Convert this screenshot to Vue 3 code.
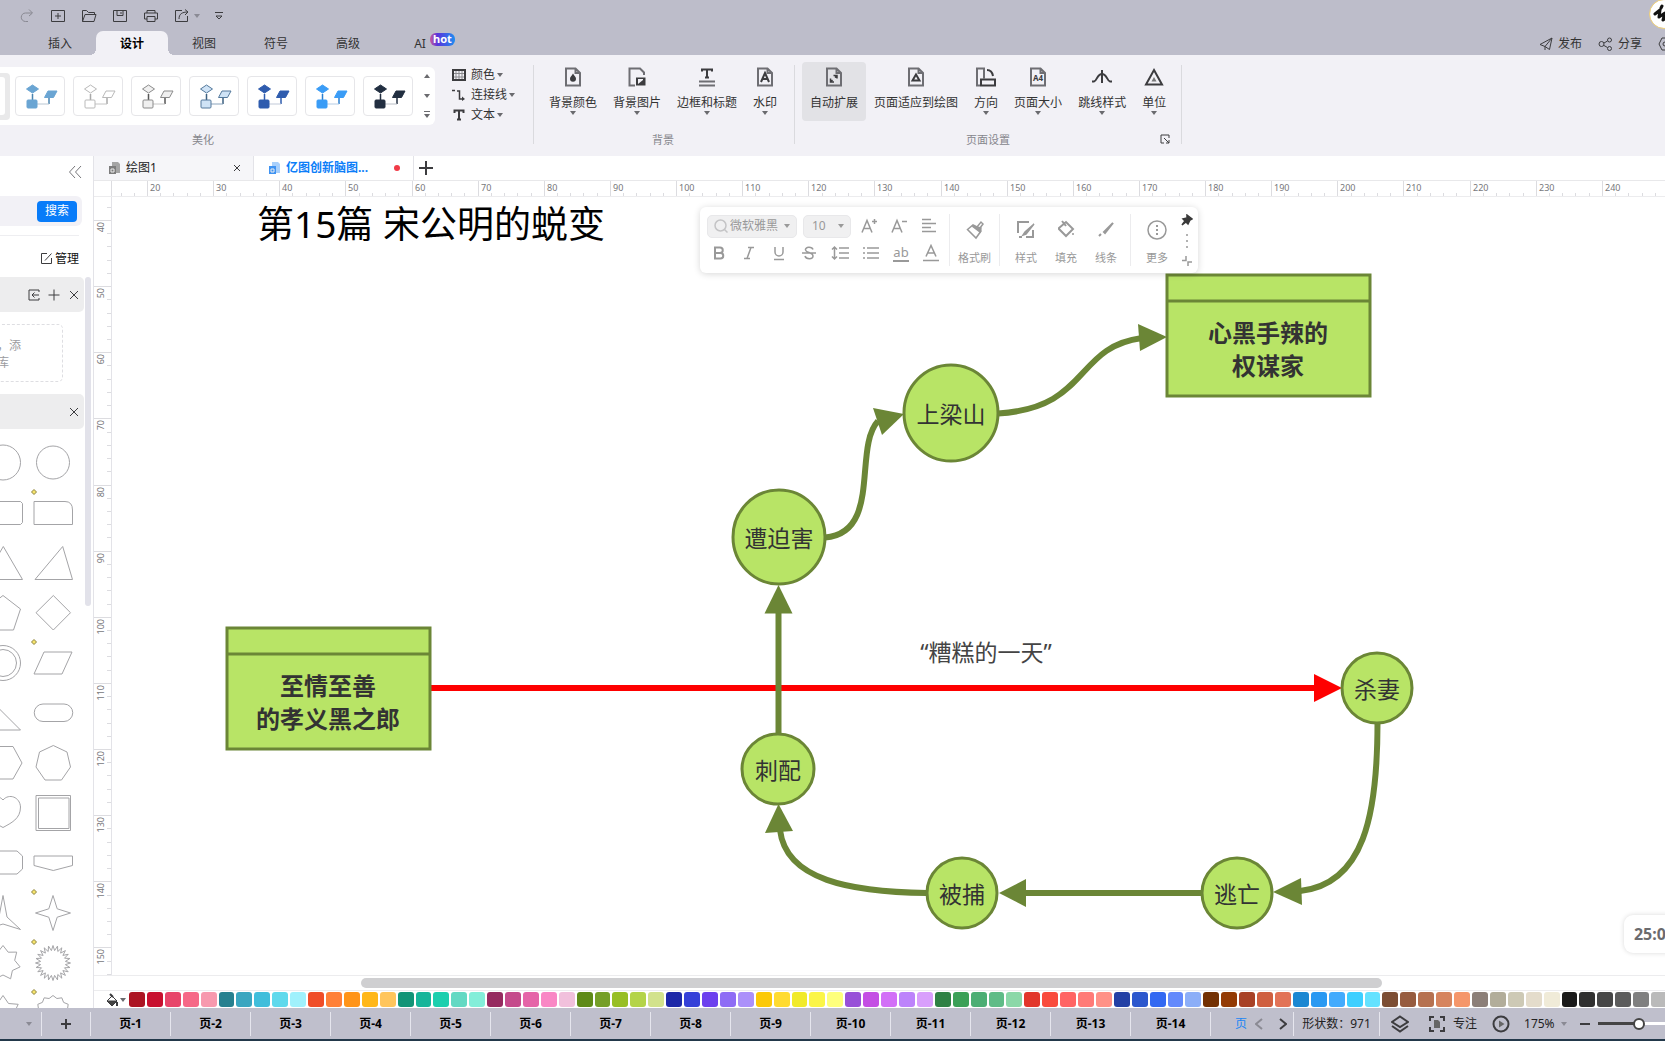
<script setup>
import { ref } from 'vue'

const menus = ['插入', '设计', '视图', '符号', '高级']

const themes = [
  { fill: '#6aa5d3', stroke: '#6aa5d3', line: '#b9c6d2', joint: '#4a84b0' },
  { fill: '#ffffff', stroke: '#b9b9b9', line: '#c4c4c4', joint: '#a9a9a9' },
  { fill: '#f0f0f0', stroke: '#8b8b8b', line: '#c4c4c4', joint: '#555555' },
  { fill: '#cfe3f6', stroke: '#54799c', line: '#8aa3bb', joint: '#3d6080' },
  { fill: '#2f5cae', stroke: '#2f5cae', line: '#c1c9d8', joint: '#2f5cae' },
  { fill: '#3a9cf6', stroke: '#3a9cf6', line: '#b4cbe4', joint: '#2a7fd0' },
  { fill: '#222f41', stroke: '#222f41', line: '#b9bec6', joint: '#222f41' },
]

const backgroundTools = [
  { id: 'bgcolor', label: '背景颜色', menu: true },
  { id: 'bgimage', label: '背景图片', menu: true },
  { id: 'border', label: '边框和标题', menu: true },
  { id: 'watermark', label: '水印', menu: true },
]
const pageTools = [
  { id: 'expand', label: '自动扩展', active: true },
  { id: 'fit', label: '页面适应到绘图' },
  { id: 'orient', label: '方向', menu: true },
  { id: 'size', label: '页面大小', menu: true },
  { id: 'jump', label: '跳线样式', menu: true },
  { id: 'unit', label: '单位', menu: true },
]
const groups = [
  { title: '背景', tools: backgroundTools },
  { title: '页面设置', tools: pageTools, launcher: true },
]

const UNIT = 6.613
function scale(first, origin, count, start) {
  const majors = []
  const mids = []
  const minors = []
  for (let i = -1; i < count; i++) {
    const at = origin + i * UNIT * 10
    if (i >= 0) majors.push({ at: Math.round(at), label: first + i * 10 })
    for (let k = 1; k < 5; k++) mids.push(Math.round(at + k * UNIT * 2))
    for (let k = 0; k < 20; k++) minors.push(Math.round(at + (k * UNIT) / 2))
  }
  return {
    majors,
    mids: mids.filter((v) => v > start),
    minors: minors.filter((v) => v > start),
  }
}
const hRuler = scale(20, 53, 23, 20)
const vRuler = scale(40, 23, 12, 0)

function star(points, outer, inner, turn = -90) {
  const list = []
  for (let i = 0; i < points * 2; i++) {
    const r = i % 2 ? inner : outer
    const a = ((turn + (i * 180) / points) * Math.PI) / 180
    list.push(`${(25 + r * Math.cos(a)).toFixed(1)},${(26 + r * Math.sin(a)).toFixed(1)}`)
  }
  return `M${list.join('L')}Z`
}
const shapes = [
  { name: '圆', d: 'M7.5 25.5a17.5 17.5 0 1 0 35 0a17.5 17.5 0 1 0 -35 0Z' },
  { name: '圆形', d: 'M8.5 25.5a16.5 16.5 0 1 0 33 0a16.5 16.5 0 1 0 -33 0Z' },
  { name: '圆角矩形', d: 'M8 14.5H42.5L44.5 16.5V35.5L42.5 37.5H8Q6 37.5 6 35.5V16.5Q6 14.5 8 14.5Z' },
  { name: '单圆角矩形', d: 'M6 14.5H37Q44.5 14.5 44.5 23V37.5H6Z', handle: true },
  { name: '三角形', d: 'M25.3 9.5L44.5 42.5H6Z' },
  { name: '斜三角形', d: 'M34.7 9.5L44.5 42.5H7Z' },
  { name: '五边形', d: 'M25 8.5L42.5 22L35.5 43H14.5L7.5 22Z' },
  { name: '菱形', d: 'M25.3 8.5L42.5 25.7L25.3 43L8 25.7Z' },
  { name: '圆环', d: 'M7.5 26a17.5 17.5 0 1 0 35 0a17.5 17.5 0 1 0 -35 0ZM11.5 26a13.5 13.5 0 1 0 27 0a13.5 13.5 0 1 0 -27 0Z' },
  { name: '平行四边形', d: 'M16 15H44L34 37H6Z', handle: true },
  { name: '直角三角形', d: 'M8 8.5L42.5 43H8Z' },
  { name: '胶囊', d: 'M15 17H36A8.7 8.7 0 0 1 36 34.5H15A8.7 8.7 0 0 1 15 17Z' },
  { name: '六边形', d: 'M15 9.5H35L44 26L35 42H15L6 26Z' },
  { name: '七边形', d: 'M25.3 8.5L39 15L42.5 30L33.5 43H17L8 30L11.5 15Z' },
  { name: '心形', d: 'M25 13C31 6 42 10 42.5 20C42.5 32 33 36 25 40.5C17 36 7.5 32 7.5 20C8 10 19 6 25 13Z' },
  { name: '边框', d: 'M8 8.5H42.5V43.5H8ZM10.5 11H41V41.5H10.5Z' },
  { name: '切角矩形', d: 'M11 14H39L44.5 19V32L39 37H11L6 32V19Z' },
  { name: '旗形', d: 'M6 19H44.5V28.5L25.3 33.5L6 28.5Z' },
  { name: '三角星', d: 'M25 8.5L29 30L42.5 42.5L25 37L7.5 42.5L21 30Z' },
  { name: '四角星', d: star(4, 17.5, 6), handle: true },
  { name: '七角星', d: star(7, 17.5, 12) },
  { name: '爆炸星', d: star(24, 17.5, 12.5), handle: true },
  { name: '六角星', d: star(6, 17.5, 11) },
  { name: '齿轮', d: star(12, 17.5, 15), handle: true },
]

const arrows = [
  { d: 'M431 688H1316', head: '1342,688 1314,674 1314,702', red: true },
  { d: 'M1377.5 723C1377.5 815 1364 884 1300 891', head: '1273,892 1301,878 1302,905' },
  { d: 'M1202 893H1024', head: '999,893 1026,879 1026,907' },
  { d: 'M927 893C850 892 786 880 780 830', head: '778.5,804 765,833 793,831' },
  { d: 'M778.5 734V611', head: '778.5,585 764.5,613.5 792.5,613.5' },
  { d: 'M825 537.5C882 533 853 448 878 421', head: '904,414 873,408 882,435' },
  { d: 'M998 413.5C1090 408 1074 347 1142 338', head: '1167,337 1138,324 1140,351' },
]
const boxes = [
  { x: 227, y: 628, lines: ['至情至善', '的孝义黑之郎'] },
  { x: 1167, y: 275, lines: ['心黑手辣的', '权谋家'] },
]
const nodes = [
  { x: 951, y: 413, rx: 47, ry: 48, label: '上梁山' },
  { x: 779, y: 537, rx: 46, ry: 47, label: '遭迫害' },
  { x: 778, y: 769, rx: 36, ry: 35, label: '刺配' },
  { x: 962, y: 893, rx: 35, ry: 35, label: '被捕' },
  { x: 1237, y: 893, rx: 35, ry: 35, label: '逃亡' },
  { x: 1377, y: 688, rx: 35, ry: 35, label: '杀妻' },
]

const swatches = (
  'ac1423 c80f2f e8456a f66887 f799ae 26808f 3aa6c0 40bedb 5fd9ec a0f1fc f04d28 ff8038 ff9419 ffb71a ffc55c ' +
  '129477 17b59a 1bcfae 63d9c3 83eed9 962a60 c54a8c e564a8 f987c5 f1c0dc 5e8a17 759f27 98bf25 b4d449 d2e28c ' +
  '1c27a8 3540d8 6d40ee 8e6cf5 ab90fa fcc907 ffdb30 f1ea2a fbf547 feff7c 9850d8 c44ee4 d26ff7 bd83fb d99ffc ' +
  '2f8144 3ba057 4cae74 5fbc87 8bd8a8 e2362b f94b3d ff6464 ff7a77 ff9187 2340a5 2c57cd 3268f2 6389fc 8caef8 ' +
  '733003 933a04 a84126 cf5f40 e27357 1b87d2 2a99f2 43abfd 3dcfff 64e2ff 7c4d33 965b3f b67150 d6845e f5966a ' +
  '8c7f78 b2ad9a cdc9b5 e4dccb f0ebd8 1a1a1a 303030 464646 5c5c5c 808080 bababa'
).split(' ')

const font = ref('微软雅黑')
const fontSize = ref('10')
</script>

<template>
  <div class="app">
    <header class="titlebar">
      <div class="quick">
        <button aria-label="重做" class="dim"><svg width="16" height="16"><path d="M13 5H6.5a4 4 0 0 0 0 8.5H9M10 1.5L13.5 5L10 8" /></svg></button>
        <button aria-label="新建"><svg width="16" height="16"><path d="M1.5 2.5h13v11h-13zM8 5v6M5 8h6" /></svg></button>
        <button aria-label="打开"><svg width="16" height="16"><path d="M1.5 13.5V2.5h4l2 2h6v2M1.5 13.5L4 6.5h11l-2 7z" /></svg></button>
        <button aria-label="保存"><svg width="16" height="16"><path d="M1.5 2.5h13v11h-13zM5 2.5v5h6v-5M9 4v2" /></svg></button>
        <button aria-label="打印"><svg width="16" height="16"><path d="M4 5V2.5h8V5M4 11H1.5V5h13v6H12M4 8.5h8v5H4z" /></svg></button>
        <button aria-label="导出"><svg width="16" height="16"><path d="M8 2.5H1.5v11h12V8M5 11c0-5 3-7 9-7M11 1.5L14 4l-3 3" /></svg></button>
        <i class="caret pale"></i>
        <button aria-label="自定义" class="more"><svg width="10" height="10"><path d="M1 1.5h8M2 5l3 3l3-3z" /></svg></button>
      </div>
      <button class="avatar" aria-label="账户"><svg width="28" height="28"><path d="M5 14L10 10L9 17L15 13L13 20L20 16M11 8l1-2" stroke="#111" stroke-width="3" fill="none" stroke-linecap="round" stroke-linejoin="round" /></svg></button>
      <nav class="menus">
        <button v-for="m in menus" :key="m" :class="{ active: m === '设计' }">{{ m }}</button>
        <button class="ai">AI<b class="hot">hot</b></button>
      </nav>
      <div class="actions">
        <button><svg width="14" height="14"><path d="M1 7.5L13 1L10.5 12.5L6 9.5zM6 9.5L13 1M6 9.5V13" /></svg>发布</button>
        <button><svg width="15" height="14"><circle cx="3.5" cy="7" r="2.5" /><circle cx="11.5" cy="3" r="2" /><circle cx="11.5" cy="11.5" r="2" /><path d="M6 6l3.5-2M6 8.5l3.5 2" /></svg>分享</button>
        <button aria-label="设置"><svg width="14" height="14"><path d="M4 1h6l3 6l-3 6H4L1 7z" /><circle cx="7" cy="7" r="2" /></svg></button>
      </div>
    </header>

    <section class="ribbon">
      <div class="beautify">
        <div class="gallery">
          <span class="picked"><i></i></span>
          <button v-for="(t, i) in themes" :key="i" class="theme" :aria-label="'主题 ' + (i + 1)">
            <svg width="48" height="38">
              <path d="M16.5 17V23M33 21V27" :stroke="t.joint" stroke-width="1.5" />
              <path d="M21 27H33" :stroke="t.line" />
              <g :stroke="t.stroke" :fill="t.fill">
                <path d="M10.5 12L16.5 8L22.5 12L16.5 16Z" />
                <rect x="11" y="23" width="10" height="8" rx="1" />
                <path d="M32 14H41L37.5 20.5H28.5Z" />
              </g>
            </svg>
          </button>
          <div class="steps"><i class="caret up"></i><i class="caret"></i><i class="caret bar"></i></div>
        </div>
        <p class="caption">美化</p>
      </div>
      <div class="styles">
        <button><svg width="14" height="12"><path d="M1 4.5h12M1 8h12M4 2v8M7 2v8M10 2v8" stroke="#8a8a8e" /><path d="M1 1h12v10H1z" stroke-width="2" /></svg>颜色<i class="caret"></i></button>
        <button><svg width="14" height="12"><path d="M0 1.5h3M5 2h2.5v8H10" stroke-width="1.5" /><path d="M10 7.5l3 2.5l-3 2z" fill="#3c3c3f" stroke="none" /></svg>连接线<i class="caret"></i></button>
        <button><svg width="14" height="12"><path d="M2.5 4V1.5h9V4M7 1.5v9M5 10.5h4" stroke-width="2" /></svg>文本<i class="caret"></i></button>
      </div>
      <div v-for="g in groups" :key="g.title" class="group">
        <div class="tools">
          <button v-for="t in g.tools" :key="t.id" class="tool" :class="{ on: t.active }">
            <svg width="20" height="20">
              <path v-if="['bgcolor', 'watermark', 'expand', 'fit', 'size'].includes(t.id)" class="page" d="M3 1.5h9.5l4.5 4.5v12.5H3zM12.5 1.5v4.5H17" />
              <path v-if="t.id === 'bgcolor'" d="M10 6.5C8.5 9 7 10 7 11.7a3 3 0 0 0 6 0C13 10 11.5 9 10 6.5Z" fill="#3c3c3f" stroke="none" />
              <g v-if="t.id === 'bgimage'"><path class="page" d="M8 18.5H2.5v-17H13l4 4V8" /><path d="M9 10.5h9.5v8H9z" fill="#3c3c3f" stroke="none" /><path d="M11 17l5-4v-1h-5z" fill="#f2f1f6" stroke="none" /></g>
              <g v-if="t.id === 'border'"><path d="M5 4.5V2.5h10v2M10 2.5v8M8 10.5h4" stroke-width="2" /><path class="page" d="M2 14.5h16M2 18.5h16" /></g>
              <path v-if="t.id === 'watermark'" d="M6 15L10 6L14 15M7.5 12h5" stroke-width="2" />
              <path v-if="t.id === 'expand'" d="M9.5 8.5h3.500v3M6.5 11.500v3.500h3.500M13 8.5L11 10.5M6.500 15l2-2" stroke-width="1.5" />
              <path v-if="t.id === 'fit'" d="M6.5 13.5L10 7.5L13.5 13.5Z" stroke-width="2" />
              <g v-if="t.id === 'orient'"><path class="page" d="M4 18.5H1v-17h7v10" /><path d="M5 12.5h14v6H5zM11 3q5 0 6 6" stroke-width="2" /></g>
              <text v-if="t.id === 'size'" x="5" y="14" font-size="8" font-weight="700" fill="#3c3c3f" stroke="none">A4</text>
              <path v-if="t.id === 'jump'" d="M0 14.5h2C5 14 5 7 10 7s5 7 8 7.5h2M10 3v13" stroke-width="2" />
              <g v-if="t.id === 'unit'"><path d="M10 3L18 17.5H2Z" stroke-width="2" /><path d="M10 10l2.5 4.5h-5z" fill="#777" stroke="none" /></g>
            </svg>
            <span>{{ t.label }}</span>
            <i v-if="t.menu" class="caret"></i>
          </button>
        </div>
        <p class="caption">{{ g.title }}</p>
        <button v-if="g.launcher" class="launcher" aria-label="页面设置选项"><svg width="10" height="10"><path d="M9 4V1H1v8h3M4 4l5 5M9 6v3H6" /></svg></button>
      </div>
    </section>

    <main class="work">
      <aside class="library">
        <div class="fold"><button aria-label="收起"><svg width="14" height="14"><path d="M7 1L1.5 7L7 13M13 1L7.5 7L13 13" /></svg></button></div>
        <div class="search"><button>搜索</button></div>
        <div class="manage"><button><svg width="11" height="11"><path d="M6 .5H.5v10h10V5M4 7.5L10.5 .5" /></svg>管理</button></div>
        <div class="lists">
          <div class="sheet">
            <div class="section">
              <button aria-label="导入"><svg width="12" height="12"><path d="M11 3V1H1v10h10V9M11 6H4M6.5 3.5L4 6l2.5 2.5" /></svg></button>
              <button aria-label="添加"><svg width="12" height="12"><path d="M6 .5v11M.5 6h11" /></svg></button>
              <button aria-label="关闭"><svg width="12" height="12"><path d="M2 2l8 8M10 2l-8 8" /></svg></button>
            </div>
            <p class="drop">，添<br />库</p>
            <div class="section">
              <button aria-label="关闭"><svg width="12" height="12"><path d="M2 2l8 8M10 2l-8 8" /></svg></button>
            </div>
            <div class="shapes">
              <button v-for="s in shapes" :key="s.name" :aria-label="s.name">
                <svg width="50" height="50"><path :d="s.d" /><path v-if="s.handle" class="handle" d="M6 2.5L8.5 5L6 7.5L3.5 5Z" /></svg>
              </button>
            </div>
          </div>
          <div class="track"><i></i></div>
        </div>
      </aside>

      <div class="editor">
        <div class="docs">
          <div class="doc">
            <svg width="13" height="14"><path d="M4 1h6l2 2v9H4z" fill="#a5a5a5" /><path d="M1 5h7v8H1z" fill="#7d7d7d" /><path d="M3 8h3v3H3z" fill="none" stroke="#eee" /></svg>
            <span>绘图1</span>
            <button aria-label="关闭绘图1"><svg width="8" height="8"><path d="M1 1l6 6M7 1L1 7" /></svg></button>
          </div>
          <div class="doc current">
            <svg width="13" height="14"><path d="M4 1h6l2 2v9H4z" fill="#a9d0fb" /><path d="M1 5h7v8H1z" fill="#3f93f2" /><path d="M3 8h3v3H3z" fill="none" stroke="#eee" /></svg>
            <span>亿图创新脑图...</span>
            <i class="dirty"></i>
          </div>
          <button class="add" aria-label="新建绘图"><svg width="14" height="14"><path d="M7 0v14M0 7h14" /></svg></button>
        </div>

        <svg class="hruler">
          <path v-for="m in hRuler.minors" :key="'n' + m" :d="`M${m}.5 15v2`" class="faint" />
          <path v-for="m in hRuler.mids" :key="'m' + m" :d="`M${m}.5 12v5`" />
          <path d="M17.5 0v17" />
          <g v-for="m in hRuler.majors" :key="m.label"><path :d="`M${m.at}.5 0v17`" /><text :x="m.at + 3" y="10">{{ m.label }}</text></g>
        </svg>

        <div class="stage">
          <svg class="vruler">
            <path v-for="m in vRuler.mids" :key="'m' + m" :d="`M13 ${m}.5h4`" />
            <g v-for="m in vRuler.majors" :key="m.label"><path :d="`M0 ${m.at}.5h17`" /><text text-anchor="end" :transform="`translate(10 ${m.at + 2}) rotate(-90)`">{{ m.label }}</text></g>
          </svg>
          <svg class="canvas">
            <g transform="translate(-112 -197)">
              <text class="title" x="257" y="238">第15篇 宋公明的蜕变</text>
              <g v-for="(a, i) in arrows" :key="i" :class="a.red ? 'flow red' : 'flow'"><path :d="a.d" /><polygon :points="a.head" /></g>
              <g v-for="b in boxes" :key="b.x" class="node">
                <rect :x="b.x" :y="b.y" width="203" height="121" />
                <path :d="`M${b.x} ${b.y + 26}h203`" />
                <text v-for="(l, i) in b.lines" :key="l" class="strong" :x="b.x + 101" :y="b.y + 67 + i * 33">{{ l }}</text>
              </g>
              <g v-for="n in nodes" :key="n.label" class="node">
                <ellipse :cx="n.x" :cy="n.y" :rx="n.rx" :ry="n.ry" />
                <text :x="n.x" :y="n.y + 10">{{ n.label }}</text>
              </g>
              <g class="node"><text class="note" x="986" y="661">“糟糕的一天”</text></g>
            </g>
          </svg>

          <div class="float">
            <div class="format">
              <div class="row">
                <label class="pick face"><svg width="14" height="14"><circle cx="6.5" cy="6.5" r="5.5" /><path d="M10.5 10.5l3 3" /></svg><select v-model="font" aria-label="字体"><option>微软雅黑</option></select><i class="caret"></i></label>
                <label class="pick num"><select v-model="fontSize" aria-label="字号"><option>10</option></select><i class="caret"></i></label>
                <button aria-label="增大字号"><svg width="16" height="16"><path d="M1 14.5L6 2.5L11 14.5M3 10.5h6M13.5 1v5M11 3.5h5" /></svg></button>
                <button aria-label="减小字号"><svg width="16" height="16"><path d="M1 14.5L6 2.5L11 14.5M3 10.5h6M11 3.5h5" /></svg></button>
                <button aria-label="对齐"><svg width="16" height="16"><path d="M1 1.5h9M1 5.5h14M1 9.5h9M1 13.5h14" /></svg></button>
              </div>
              <div class="row marks">
                <button aria-label="粗体"><svg width="16" height="16"><path d="M4 2.5h5a2.5 2.5 0 0 1 0 5.5H4zM4 8h5.5a2.5 2.5 0 0 1 0 5.5H4z" stroke-width="2" /></svg></button>
                <button aria-label="斜体"><svg width="16" height="16"><path d="M7 2.5h6M3 13.5h6M10 2.5L6 13.5" /></svg></button>
                <button aria-label="下划线"><svg width="16" height="16"><path d="M4 2v5a4 4 0 0 0 8 0V2M3 14.5h10" /></svg></button>
                <button aria-label="删除线"><svg width="16" height="16"><path d="M12 4.5C11 1.5 4 1.5 4.5 5c.5 3 7.5 2 7.5 6c0 3.5-7 3.5-8 0M1 8h14" /></svg></button>
                <button aria-label="行距"><svg width="18" height="16"><path d="M3.5 2v12M1 4.5L3.5 2L6 4.5M1 11.5L3.5 14L6 11.5M8 3h10M8 8h10M8 13h10" /></svg></button>
                <button aria-label="项目符号"><svg width="16" height="16"><path d="M0 3h2M0 8h2M0 13h2M4 3h12M4 8h12M4 13h12" /></svg></button>
                <button class="letters" aria-label="高亮">ab</button>
                <button aria-label="字体颜色"><svg width="16" height="18"><path d="M3 12.5L8 1.5L13 12.5M5 9h6M0 16.5h16" /></svg></button>
              </div>
            </div>
            <div class="slot brush"><button><svg width="20" height="22"><path d="M2.500 10.500L8 6L12 8L16 3L18 5L15 9L16 12L11 19Z" /><path d="M7 7l8 6l1-4l-4-1z" fill="#999" /></svg>格式刷</button></div>
            <div class="slot trio">
              <button><svg width="20" height="22"><path d="M2 14V3h11M17 11v7h-7M3 18h3" stroke-width="2" /><path d="M18 5L9 13l-2 3l3-1Z" fill="#999" /></svg>样式</button>
              <button><svg width="20" height="22"><path d="M3 9L10 3L17 10L10 17L3 10ZM6 2l4 5" stroke-width="2" /><circle cx="17" cy="15" r="1" fill="#999" stroke="none" /></svg>填充</button>
              <button><svg width="20" height="22"><path d="M17 4L8 13l1 1ZM3 17l2-2" stroke-width="2" /></svg>线条</button>
            </div>
            <div class="slot"><button><svg width="20" height="22"><circle cx="10" cy="11" r="9" /><path d="M10 6v2M10 10v2M10 14v2" stroke-width="2" /></svg>更多</button></div>
            <div class="edge">
              <button aria-label="固定"><svg width="12" height="12"><path d="M6 1l5 4l-2 1l-2 4l-2-2l-4 3l3-4l-2-2l4-1z" fill="#3a3a3a" stroke="#3a3a3a" /></svg></button>
              <svg width="4" height="16"><path d="M2 1v2M2 7v2M2 13v2" /></svg>
              <svg width="10" height="10"><path d="M0 4.5h4V0M6 10V6h4" /></svg>
            </div>
          </div>
          <div class="timer">25:00</div>
        </div>

        <div class="hscroll"><i></i></div>
        <div class="palette">
          <button class="bucket" aria-label="填充颜色"><svg width="14" height="14"><path d="M2 8L7 3L12 8L7 13Z" fill="#fff" /><path d="M2 8h10L7 13Z" fill="#444" /><path d="M5 1l3 3M12 9v4" stroke-width="2" /></svg><i class="caret"></i></button>
          <div class="swatches"><button v-for="c in swatches" :key="c" :aria-label="'#' + c" :style="{ background: '#' + c }"></button></div>
        </div>
      </div>
    </main>

    <footer class="status">
      <div class="cell drop-pages"><i class="caret pale"></i></div>
      <button class="cell plus" aria-label="添加页面"><svg width="10" height="10"><path d="M5 0v10M0 5h10" stroke-width="2" /></svg></button>
      <button v-for="n in 14" :key="n" class="cell tab">页-{{ n }}</button>
      <div class="cell turn">
        <a href="#">页</a>
        <button aria-label="上一页" class="dim"><svg width="8" height="12"><path d="M7 1L1 6L7 11" stroke-width="2" /></svg></button>
        <button aria-label="下一页"><svg width="8" height="12"><path d="M1 1L7 6L1 11" stroke-width="2" /></svg></button>
      </div>
      <div class="cell count">形状数：971</div>
      <div class="view">
        <button aria-label="图层"><svg width="18" height="18"><path d="M9 1.5L17 7L9 12L1 7ZM1 11L9 16.5L17 11" stroke-width="2" /></svg></button>
        <button class="focus"><svg width="16" height="16"><path d="M1 5V1h4M11 1h4v4M15 11v4h-4M5 15H1v-4" stroke-width="2" /><path d="M5 4h4l2 2v6H5z" fill="#666" stroke="none" /></svg>专注</button>
        <button aria-label="播放" class="play"><svg width="18" height="18"><circle cx="9" cy="9" r="7.5" stroke-width="2" /><path d="M7 5.5L12.5 9L7 12.5Z" fill="#666" stroke="none" /></svg></button>
        <span class="zoom">175%</span><i class="caret pale"></i>
        <button aria-label="缩小" class="minus"><svg width="10" height="2"><path d="M0 1h10" stroke-width="2" /></svg></button>
        <input type="range" min="0" max="100" value="42" aria-label="缩放" />
      </div>
    </footer>
  </div>
</template>

<style>
body { margin: 0; overflow: hidden; }
</style>

<style scoped>
.app { display: flex; flex-direction: column; height: 100vh; overflow: hidden; background: #fff; border-bottom: 2px solid #22384a; box-sizing: border-box; font: 12px/16px "Noto Sans", "Noto Sans CJK SC", sans-serif; color: #333; }
button { margin: 0; padding: 0; border: 0; background: none; font: inherit; color: inherit; display: flex; align-items: center; justify-content: center; flex: none; }
svg { display: block; flex: none; fill: none; stroke: #3c3c3f; }
p { margin: 0; }
.caret { flex: none; width: 0; height: 0; border: 3px solid transparent; border-top: 4px solid #6a6a6e; border-bottom: 0; }
.caret.pale { border-top-color: #8a8a94; }
.caret.up { border-bottom: 4px solid #6a6a6e; border-top: 0; }
.caret.bar { position: relative; }
.caret.bar::before { content: ""; position: absolute; left: -3px; top: -7px; width: 6px; height: 1px; background: #6a6a6e; }
.dim { opacity: .4; }

.titlebar { flex: none; height: 55px; display: grid; grid-template: 31px 24px / 1fr auto; background: #bdbdca; }
.quick { display: flex; align-items: center; gap: 15px; padding-left: 19px; }
.quick .caret { margin-left: -11px; }
.quick .more { margin-left: -1px; }
.avatar { justify-self: end; width: 28px; height: 28px; border-radius: 50%; background: #fff; outline: 1px solid #f2d27a; margin-right: -13px; }
.menus { display: flex; padding-left: 24px; }
.menus button { width: 72px; position: relative; padding-top: 2px; }
.menus .active { background: #f2f1f6; border-radius: 7px 7px 0 0; font-weight: 700; color: #000; }
.menus .active::before, .menus .active::after { content: ""; position: absolute; bottom: 0; width: 6px; height: 6px; }
.menus .active::before { left: -6px; background: radial-gradient(circle at 0 0, #bdbdca 6px, #f2f1f6 6px); }
.menus .active::after { right: -6px; background: radial-gradient(circle at 100% 0, #bdbdca 6px, #f2f1f6 6px); }
.hot { position: absolute; left: 46px; top: 2px; height: 13px; padding: 0 3px; border-radius: 6px; background: linear-gradient(90deg, #c85a9e, #5a35dc 30%, #1e8df0); color: #fff; font-size: 11px; line-height: 12px; }
.actions { display: flex; gap: 16px; margin-right: -7px; }
.actions button { gap: 5px; padding-top: 2px; }

.ribbon { flex: none; height: 101px; display: flex; background: #f2f1f6; }
.beautify { width: 435px; padding-top: 12px; }
.gallery { display: flex; align-items: center; height: 58px; background: #fff; border-radius: 0 6px 6px 0; }
.picked { width: 10px; height: 47px; margin-right: 5px; background: #e9e9ea; border-radius: 0 4px 4px 0; display: flex; align-items: center; }
.picked i { width: 5px; height: 38px; background: #fff; border-radius: 0 3px 3px 0; }
.theme { width: 50px; height: 40px; margin-right: 8px; border: 1px solid #e6e6e9; border-radius: 4px; }
.steps { display: flex; flex-direction: column; align-items: center; gap: 16px; margin-left: 3px; }
.caption { text-align: center; font-size: 11px; line-height: 16px; color: #86868c; }
.beautify .caption { width: 406px; margin-top: 7px; }
.styles { width: 98px; padding: 12px 0 0 17px; box-sizing: border-box; display: flex; flex-direction: column; align-items: flex-start; gap: 4px; }
.beautify, .styles { flex: none; }
.styles button { gap: 5px; }
.styles .caret { margin-left: -3px; }
.group { position: relative; padding: 7px 8px 0; flex: none; }
.group:nth-child(3) { padding-right: 9px; }
.group::before, .group:last-child::after { content: ""; position: absolute; left: 0; top: 10px; width: 1px; height: 79px; background: #dadade; }
.group:last-child::after { left: auto; right: 0; }
.tools { display: flex; height: 59px; }
.tool { flex-direction: column; justify-content: flex-start; padding: 5px 8px 0; border-radius: 4px; }
.tool.on { background: #e2e2e6; }
.tool span { margin-top: 8px; line-height: 16px; }
.tool .caret { margin-top: 0; }
.page { stroke: #6e6e73; stroke-width: 2; }
.group .caption { margin-top: 11px; }
.launcher { position: absolute; right: 12px; top: 79px; }

.work { flex: 1; min-height: 0; display: flex; }
.library { flex: none; width: 93px; border-right: 1px solid #e3e3e8; display: flex; flex-direction: column; overflow: hidden; }
.fold { height: 40px; display: flex; justify-content: flex-end; align-items: center; padding: 0 11px 8px 0; box-sizing: border-box; }
.fold svg { stroke: #77777b; }
.search { height: 30px; width: 82px; background: #f2f1f6; border-radius: 0 6px 6px 0; display: flex; align-items: center; justify-content: flex-end; padding-right: 5px; box-sizing: border-box; flex: none; }
.search button { width: 40px; height: 21px; border-radius: 4px; background: #087cf9; color: #fff; }
.manage { flex: none; margin-top: 9px; width: 79px; height: 42px; border-top: 1px solid #eeeef1; box-sizing: border-box; display: flex; align-items: center; justify-content: flex-end; padding-top: 4px; }
.manage button { gap: 3px; color: #111; }
.lists { flex: 1; min-height: 0; display: flex; gap: 1px; }
.sheet { width: 84px; overflow: hidden; }
.section { height: 35px; background: #ededee; border-radius: 0 5px 5px 0; display: flex; align-items: center; justify-content: flex-end; gap: 8px; padding-right: 4px; }
.drop { height: 58px; width: 66px; margin: 12px 0 12px -3px; border: 1px dashed #dedee2; border-left: 0; border-radius: 0 5px 5px 0; box-sizing: border-box; padding-top: 12px; color: #9b9ba0; line-height: 17px; }
.track { width: 6px; }
.track i { display: block; height: 45%; border-radius: 3px; background: #e2e2ea; }
.shapes { display: grid; grid-template-columns: 50px 50px; margin: 8px 0 0 -22px; }
.shapes svg { stroke: #a4a4a7; }
.shapes .handle { fill: #f7e56a; stroke: #8c8240; }

.editor { flex: 1; min-width: 0; display: flex; flex-direction: column; }
.docs { flex: none; height: 24px; display: flex; }
.doc { width: 160px; box-sizing: border-box; background: #f6f6f9; border-right: 1px solid #e3e3e8; display: flex; align-items: center; gap: 5px; padding: 0 12px 0 14px; color: #222; }
.doc span { flex: 1; }
.doc > svg { stroke: none; }
.current { background: #fff; color: #0c7ef8; font-weight: 700; }
.dirty { width: 6px; height: 6px; border-radius: 50%; background: #f13b47; margin-right: 1px; }
.add { margin-left: 5px; }
.add svg { stroke-width: 2; }
.hruler { width: 100%; height: 17px; border-top: 1px solid #e8e8ea; border-bottom: 1px solid #ececee; box-sizing: border-box; stroke: #dcdce0; }
.hruler text, .vruler text { font-size: 9px; fill: #77777b; stroke: none; }
.faint { stroke: #ebebee; }
.stage { flex: 1; min-height: 0; display: flex; position: relative; overflow: hidden; }
.vruler { width: 18px; height: 100%; border-right: 1px solid #e3e3e8; box-sizing: border-box; stroke: #dcdce0; }
.canvas { flex: 1; height: 100%; stroke: none; }
.title { font-size: 37px; fill: #000; }
.flow path { stroke: #6b8636; stroke-width: 6; fill: none; }
.flow polygon { fill: #6b8636; }
.flow.red path { stroke: #fe0000; }
.flow.red polygon { fill: #fe0000; }
.node rect, .node ellipse, .node path { fill: #b8e466; stroke: #6b8636; stroke-width: 3; }
.node text { font-size: 23px; fill: #333; text-anchor: middle; }
.node .strong { font-size: 24px; font-weight: 700; }
.node .note { fill: #444; }

.float { position: absolute; left: 606px; top: 10px; height: 66px; display: flex; background: #fff; border-radius: 6px; box-shadow: 0 1px 7px rgba(0, 0, 0, .16); color: #999; box-sizing: border-box; padding: 7px 0; font-size: 11px; }
.float svg { stroke: #999; stroke-width: 1.5; }
.format { width: 242px; padding-left: 7px; display: flex; flex-direction: column; gap: 3px; }
.row { display: flex; align-items: center; gap: 14px; height: 24px; }
.pick { height: 23px; background: #f0f0f1; border: 1px solid #e8e8ea; border-radius: 5px; box-sizing: border-box; display: flex; align-items: center; padding: 0 6px; }
.pick select { appearance: none; flex: 1; min-width: 0; border: 0; padding: 0; background: none; font: inherit; font-size: 12px; color: inherit; }
.pick .caret { border-top-color: #999; }
.face { width: 90px; margin-right: -8px; }
.face svg { margin-right: 2px; stroke: #c4c4c6; }
.num { width: 48px; margin-right: -4px; padding-left: 8px; }
.marks { padding-left: 4px; }
.letters { width: 16px; height: 18px; font-size: 13px; line-height: 15px; border-bottom: 2px solid #999; }
.slot { display: flex; gap: 18px; padding: 0 12px; border-left: 1px solid #ececee; }
.slot button { flex-direction: column; justify-content: flex-start; gap: 9px; padding-top: 5px; width: 22px; white-space: nowrap; }
.slot.brush button { width: 25px; }
.slot.trio { padding: 0 13px 0 15px; }
.slot:nth-last-child(2) { padding: 0 7px 0 15px; }
.edge { width: 23px; display: flex; flex-direction: column; align-items: center; justify-content: space-between; }
.timer { position: absolute; right: -17px; bottom: 22px; height: 38px; line-height: 38px; padding: 0 7px 0 10px; border-radius: 9px; background: #fff; box-shadow: 0 0 5px rgba(0, 0, 0, .15); font-size: 16px; font-weight: 700; color: #6b6b6e; }

.hscroll { flex: none; height: 16px; border-top: 1px solid #ececee; border-bottom: 1px solid #ececee; box-sizing: border-box; padding-top: 2px; }
.hscroll i { display: block; margin-left: 17%; width: 65%; height: 10px; border-radius: 5px; background: #cfcfd1; }
.palette { flex: none; height: 17px; display: flex; align-items: center; overflow: hidden; }
.bucket { width: 35px; padding-left: 7px; gap: 1px; box-sizing: border-box; }
.swatches { flex: 1; min-width: 0; margin-right: -2px; display: flex; gap: 2px; height: 15px; }
.swatches button { flex: 1; min-width: 0; border-radius: 3px; }

.status { flex: none; height: 31px; display: flex; align-items: center; background: #bfbfcc; color: #222; }
.cell { height: 24px; box-sizing: border-box; border-right: 1px solid #e6e6ee; display: flex; align-items: center; justify-content: center; flex: none; }
.drop-pages { width: 42px; padding-left: 16px; }
.plus { width: 49px; }
.tab { width: 80px; font-weight: 700; color: #000; }
.turn { width: 83px; justify-content: flex-end; gap: 16px; padding-right: 6px; }
.turn a { color: #1a86f5; text-decoration: none; margin-right: -8px; }
.count { width: 86px; }
.view { flex: 1; min-width: 0; display: flex; align-items: center; padding-left: 11px; overflow: hidden; }
.focus { margin-left: 20px; gap: 8px; }
.play { margin: 0 14px 0 15px; }
.zoom { width: 32px; margin-right: 6px; }
.minus { margin: 0 8px 0 13px; }
input[type="range"] { appearance: none; flex: none; width: 96px; height: 14px; margin: 0; background: linear-gradient(#444, #444) 0 50% / 40px 3px no-repeat, linear-gradient(#fff, #fff) 0 50% / 100% 3px no-repeat; }
input[type="range"]::-webkit-slider-thumb { appearance: none; width: 12px; height: 12px; border: 2px solid #444; border-radius: 50%; background: #fff; box-sizing: border-box; }
</style>
